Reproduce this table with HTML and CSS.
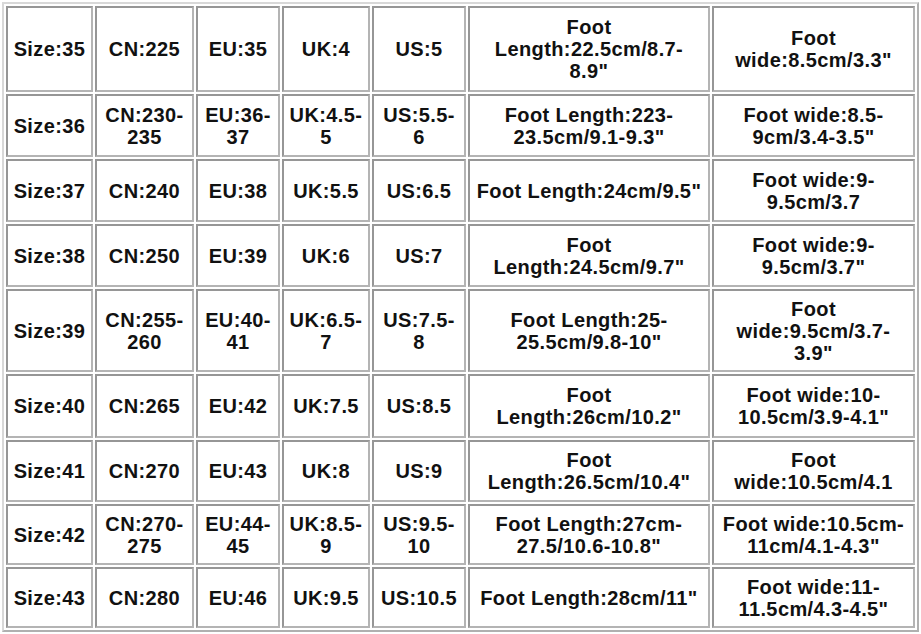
FILE: index.html
```html
<!DOCTYPE html>
<html>
<head>
<meta charset="utf-8">
<link rel="stylesheet" href="styles.css">
</head>
<body>
<table class="size-table">
  <colgroup>
    <col class="c1"><col class="c2"><col class="c3"><col class="c4"><col class="c5"><col class="c6"><col class="c7">
  </colgroup>
  <tbody>
    <tr class="r86">
      <td>Size:35</td><td>CN:225</td><td>EU:35</td><td>UK:4</td><td>US:5</td><td>Foot Length:22.5cm/8.7-<br>8.9"</td><td>Foot wide:8.5cm/3.3"</td>
    </tr>
    <tr class="r63">
      <td>Size:36</td><td>CN:230-235</td><td>EU:36-37</td><td>UK:4.5-5</td><td>US:5.5-6</td><td>Foot Length:223-23.5cm/9.1-9.3"</td><td>Foot wide:8.5-9cm/3.4-3.5"</td>
    </tr>
    <tr class="r63">
      <td>Size:37</td><td>CN:240</td><td>EU:38</td><td>UK:5.5</td><td>US:6.5</td><td>Foot Length:24cm/9.5"</td><td>Foot wide:9-9.5cm/3.7</td>
    </tr>
    <tr class="r63">
      <td>Size:38</td><td>CN:250</td><td>EU:39</td><td>UK:6</td><td>US:7</td><td>Foot Length:24.5cm/9.7"</td><td>Foot wide:9-9.5cm/3.7"</td>
    </tr>
    <tr class="r83">
      <td>Size:39</td><td>CN:255-260</td><td>EU:40-41</td><td>UK:6.5-7</td><td>US:7.5-8</td><td>Foot Length:25-25.5cm/9.8-10"</td><td>Foot wide:9.5cm/3.7-3.9"</td>
    </tr>
    <tr class="r64">
      <td>Size:40</td><td>CN:265</td><td>EU:42</td><td>UK:7.5</td><td>US:8.5</td><td>Foot Length:26cm/10.2"</td><td>Foot wide:10-10.5cm/3.9-4.1"</td>
    </tr>
    <tr class="r62">
      <td>Size:41</td><td>CN:270</td><td>EU:43</td><td>UK:8</td><td>US:9</td><td>Foot Length:26.5cm/10.4"</td><td>Foot wide:10.5cm/4.1</td>
    </tr>
    <tr class="r61">
      <td>Size:42</td><td>CN:270-275</td><td>EU:44-45</td><td>UK:8.5-9</td><td>US:9.5-10</td><td>Foot Length:27cm-27.5/10.6-10.8"</td><td>Foot wide:10.5cm-11cm/4.1-4.3"</td>
    </tr>
    <tr class="r61">
      <td>Size:43</td><td>CN:280</td><td>EU:46</td><td>UK:9.5</td><td>US:10.5</td><td>Foot Length:28cm/11"</td><td>Foot wide:11-11.5cm/4.3-4.5"</td>
    </tr>
  </tbody>
</table>
</body>
</html>
```
FILE: styles.css
```css
html, body {
  margin: 0;
  padding: 0;
  background: #ffffff;
}

.size-table {
  margin: 2px 0 0 2px;
  width: 917px;
  table-layout: fixed;
  border-collapse: separate;
  border-spacing: 2px;
  border: 2px solid;
  border-color: #d8d8d8 #b0b0b0 #b0b0b0 #d8d8d8;
  font-family: "Liberation Sans", Arial, sans-serif;
  font-weight: bold;
  font-size: 20px;
  letter-spacing: 0.4px;
  line-height: 22px;
  color: #111111;
}

.c1 { width: 87px; }
.c2 { width: 99px; }
.c3 { width: 84px; }
.c4 { width: 88px; }
.c5 { width: 94px; }
.c6 { width: 242px; }
.c7 { width: 203px; }

.size-table td {
  box-sizing: border-box;
  border: 2px solid;
  border-color: #969696 #b4b4b4 #b4b4b4 #969696;
  padding: 0 5px;
  text-align: center;
  vertical-align: middle;
  background: #ffffff;
  overflow: visible;
}

.r86 { height: 86px; }
.r83 { height: 83px; }
.r64 { height: 64px; }
.r63 { height: 63px; }
.r62 { height: 62px; }
.r61 { height: 61px; }
```
